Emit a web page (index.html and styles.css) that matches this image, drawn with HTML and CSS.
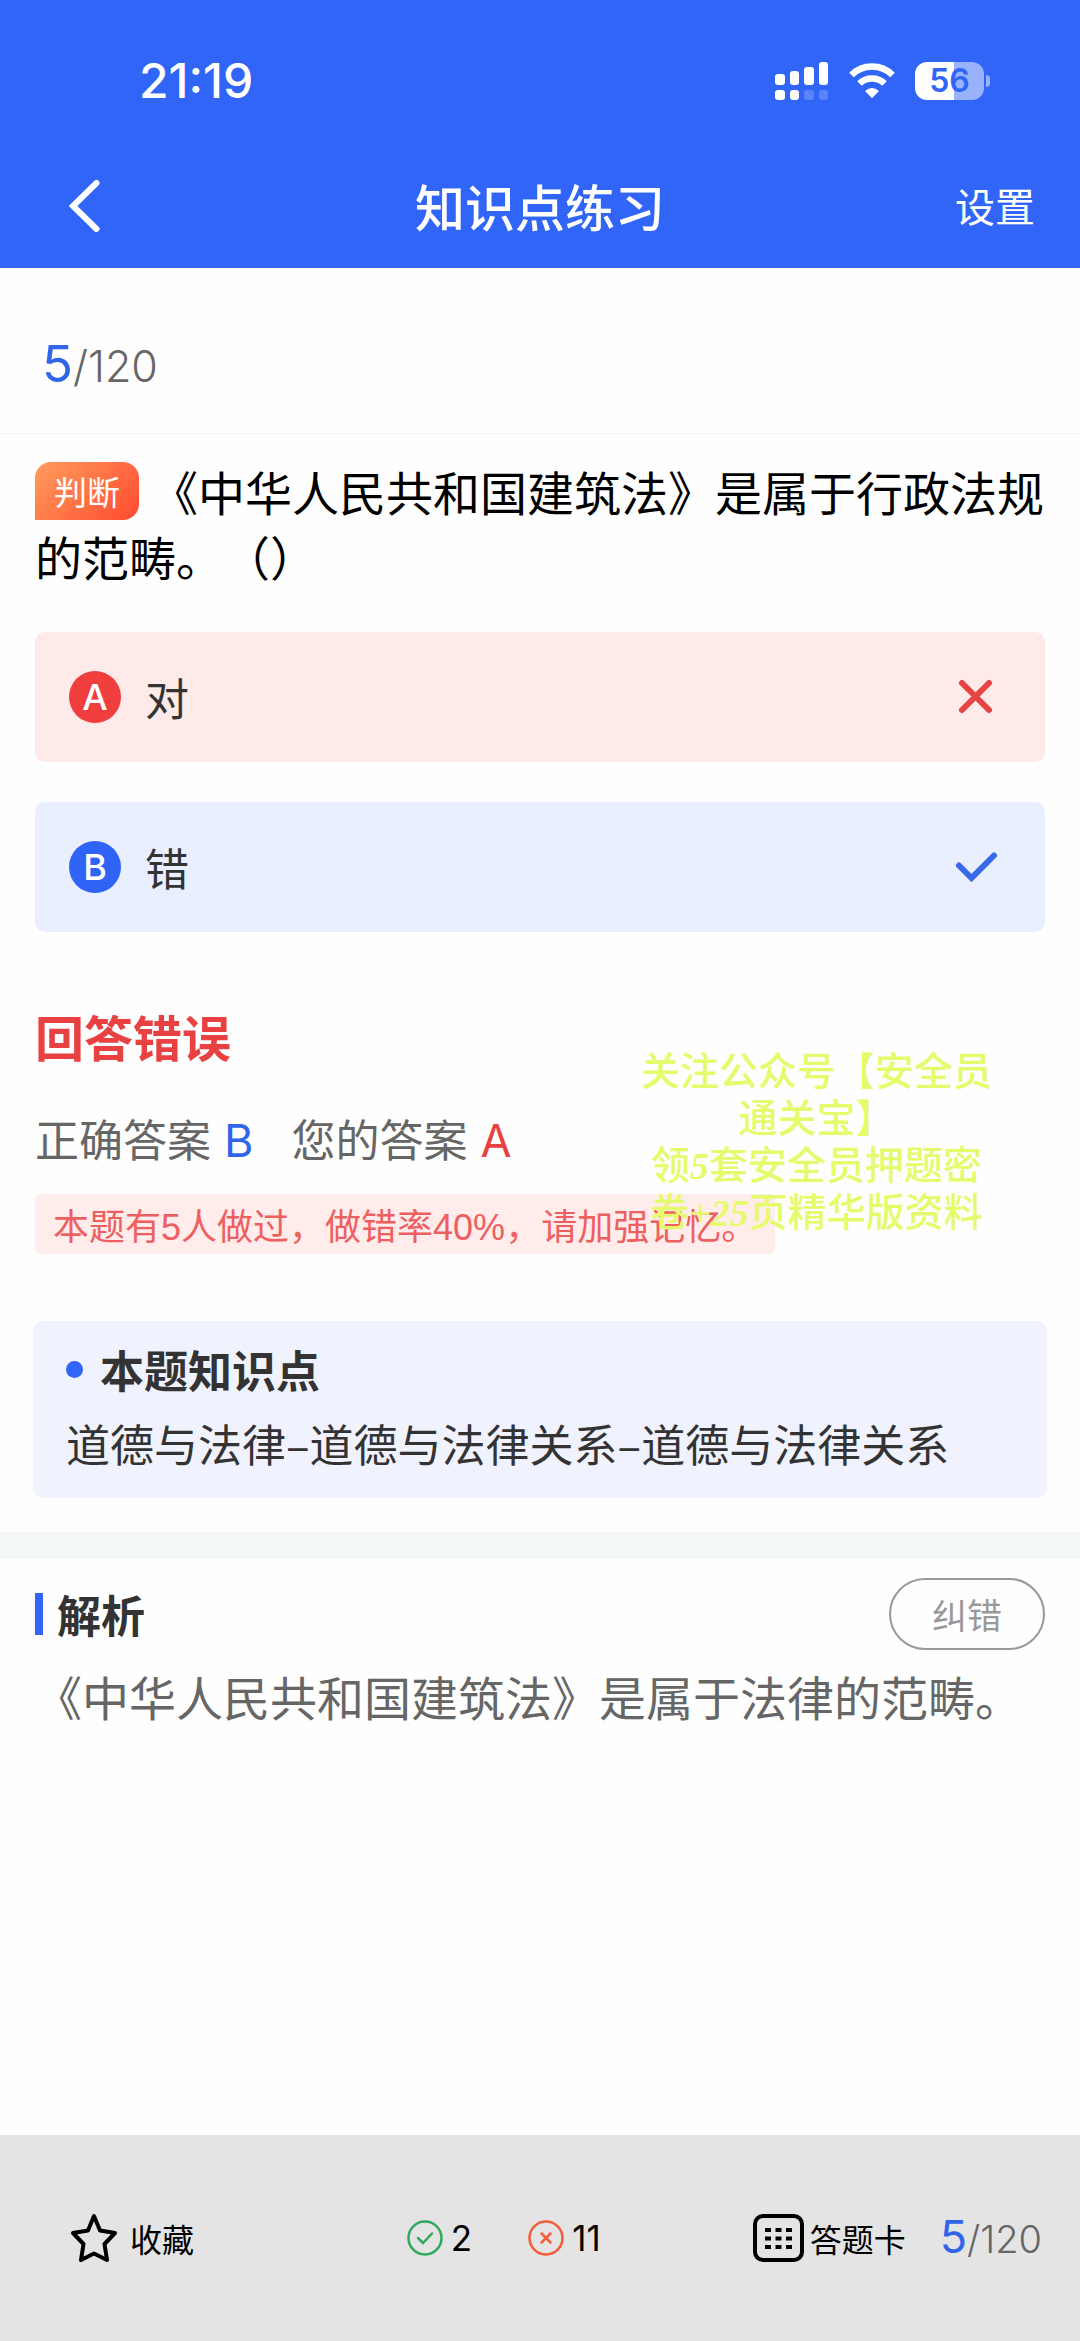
FILE: index.html
```html
<!DOCTYPE html>
<html lang="zh-CN">
<head>
<meta charset="utf-8">
<meta name="viewport" content="width=device-width, initial-scale=1">
<title>知识点练习</title>
<link rel="stylesheet" href="styles.css">
</head>
<body>
<div class="page">
  <header class="header">
    <div class="status">
      <span class="status-time">21:19</span>
      <div class="status-icons">
        <svg width="54" height="38" viewBox="0 0 54 38" fill="#fff" aria-hidden="true">
          <rect x="0" y="12" width="10" height="11" rx="3"/>
          <rect x="15" y="9" width="9" height="14" rx="3"/>
          <rect x="29" y="5" width="10" height="18" rx="3"/>
          <rect x="44" y="0" width="9" height="23" rx="3"/>
          <rect x="0" y="28" width="10" height="10" rx="3"/>
          <rect x="15" y="28" width="9" height="10" rx="3"/>
          <rect x="29" y="28" width="10" height="10" rx="3" opacity=".2"/>
          <rect x="44" y="28" width="9" height="10" rx="3" opacity=".2"/>
        </svg>
        <svg width="46" height="36" viewBox="0 0 46 36" aria-hidden="true">
          <path d="M2.500 12A29 29 0 0 1 43.500 12" fill="none" stroke="#fff" stroke-width="6.500"/>
          <path d="M10.500 20.500A18 18 0 0 1 35.500 20.500" fill="none" stroke="#fff" stroke-width="6.500"/>
          <path d="M16 28Q23 22 30 28L23.700 34.500Q23 35.200 22.300 34.500Z" fill="#fff"/>
        </svg>
        <div class="battery"><span class="battery-body">56</span><span class="battery-cap"></span></div>
      </div>
    </div>
    <nav class="nav">
      <button class="nav-back" type="button" aria-label="返回">
        <svg width="32" height="54" viewBox="0 0 32 54" fill="none" stroke="#fff" stroke-width="6" stroke-linecap="round" aria-hidden="true"><path d="M27.500 5L4 28L27.500 51"/></svg>
      </button>
      <h1 class="nav-title">知识点练习</h1>
      <button class="nav-settings" type="button">设置</button>
    </nav>
  </header>

  <main class="main">
    <div class="progress"><span class="progress-now">5</span><span class="progress-all">/120</span></div>

    <section class="question">
      <p class="question-text"><span class="tag">判断</span>《中华人民共和国建筑法》是属于行政法规的范畴。（）</p>
      <div class="options">
        <button class="option option-wrong" type="button">
          <span class="option-key">A</span><span class="option-label">对</span>
          <svg width="44" height="44" viewBox="0 0 44 44" fill="none" stroke="#e84343" stroke-width="6" stroke-linecap="round" aria-hidden="true"><path d="M8 8L35 35M35 8L8 35"/></svg>
        </button>
        <button class="option option-right" type="button">
          <span class="option-key">B</span><span class="option-label">错</span>
          <svg width="44" height="44" viewBox="0 0 44 44" fill="none" stroke="#3a69ea" stroke-width="6" stroke-linecap="round" aria-hidden="true"><path d="M5 20.500L17.500 33L40 10.500"/></svg>
        </button>
      </div>
    </section>

    <section class="result">
      <h2 class="result-title">回答错误</h2>
      <div class="answers">
        <span>正确答案</span><span class="answer answer-right">B</span>
        <span>您的答案</span><span class="answer answer-wrong">A</span>
      </div>
      <p class="note">本题有<span class="num">5</span>人做过，做错率<span class="num">40%</span>，请加强记忆。</p>
      <p class="promo">关注公众号【安全员<br>通关宝】<br>领<i>5</i>套安全员押题密<br>卷<i>+25</i>页精华版资料</p>
    </section>

    <section class="knowledge">
      <h3 class="knowledge-title">本题知识点</h3>
      <p class="knowledge-path">道德与法律–道德与法律关系–道德与法律关系</p>
    </section>

    <section class="analysis">
      <div class="analysis-head">
        <h3 class="analysis-title">解析</h3>
        <button class="report" type="button">纠错</button>
      </div>
      <p class="analysis-text">《中华人民共和国建筑法》是属于法律的范畴。</p>
    </section>
  </main>

  <footer class="footer">
    <div class="footer-left">
      <button class="tool tool-star" type="button">
        <svg width="48" height="50" viewBox="0 0 48 50" fill="none" stroke="#000" stroke-width="4" stroke-linejoin="round" aria-hidden="true"><path d="M24 3L30 17.500L45 20L34.500 31L37 47L24 40.500L11 47L13.500 31L3 20L18 17.500Z"/></svg>
        <span>收藏</span>
      </button>
    </div>
    <div class="scores">
      <span class="score">
        <svg width="36" height="36" viewBox="0 0 36 36" fill="none" stroke="#31a95c" stroke-width="2.500" stroke-linecap="round" aria-hidden="true"><circle cx="18" cy="18" r="16.500"/><path d="M11 18L16 23L25 13.500"/></svg>
        2</span>
      <span class="score">
        <svg width="36" height="36" viewBox="0 0 36 36" fill="none" stroke="#f55c3c" stroke-width="2.500" stroke-linecap="round" aria-hidden="true"><circle cx="18" cy="18" r="16.500"/><path d="M13.500 13.500L22.500 22.500M22.500 13.500L13.500 22.500"/></svg>
        11</span>
    </div>
    <div class="footer-right">
      <button class="tool tool-card" type="button">
        <svg width="51" height="48" viewBox="0 0 51 48" aria-hidden="true">
          <rect x="2" y="2" width="47" height="44" rx="8" fill="none" stroke="#000" stroke-width="4"/>
          <path d="M12 16h6M22.500 16h6M33 16h6M12 24.500h6M22.500 24.500h6M33 24.500h6M12 33h6M22.500 33h6M33 33h6" stroke="#000" stroke-width="4"/>
        </svg>
        <span>答题卡</span>
      </button>
      <div class="progress-small"><span class="progress-now">5</span><span class="progress-all">/120</span></div>
    </div>
  </footer>
</div>
</body>
</html>
```
FILE: styles.css
```css
* {
  box-sizing: border-box;
  margin: 0;
  padding: 0;
}

body {
  background: #fefefe;
  color: #333;
  font-family: "Noto Sans CJK SC", sans-serif;
  font-size: 44px;
  text-spacing-trim: space-all;
}

button {
  border: 0;
  background: none;
  color: inherit;
  font: inherit;
  cursor: pointer;
}

svg {
  display: block;
  flex: none;
}

.page {
  display: flex;
  flex-direction: column;
  min-height: 100vh;
}

/* Header */
.header {
  background: #3165f8;
  color: #fff;
}

.status {
  display: flex;
  align-items: center;
  justify-content: space-between;
  height: 141px;
  padding: 20px 90px 0 139px;
}

.status-time {
  font: 500 48px/60px Inter, sans-serif;
}

.status-icons {
  display: flex;
  align-items: center;
  gap: 20px;
}

.battery {
  display: flex;
  align-items: center;
  gap: 2px;
}

.battery-body {
  width: 69px;
  border-radius: 12px;
  background: linear-gradient(90deg, #fff 56%, #98b2fc 56%);
  color: #3165f8;
  font: 600 32px/38px Inter, sans-serif;
  text-align: center;
}

.battery-cap {
  width: 4px;
  height: 12px;
  border-radius: 0 4px 4px 0;
  background: #98b2fc;
}

.nav {
  display: grid;
  grid-template-columns: 1fr auto 1fr;
  align-items: center;
  height: 127px;
  padding: 0 45px 0 69px;
}

.nav-back {
  justify-self: start;
}

.nav-title {
  font-size: 50px;
  font-weight: 500;
  line-height: 60px;
  margin-right: 24px;
}

.nav-settings {
  justify-self: end;
  font-size: 40px;
  line-height: 60px;
}

/* Progress */
.progress {
  padding: 66px 42px 37px;
  border-bottom: 1px solid #f3f3f5;
  font: 300 43px/60px Inter, sans-serif;
}

.progress-now {
  color: #3165e8;
  font-size: 51px;
  font-weight: 400;
}

.progress-all {
  color: #666;
}

/* Question */
.question {
  padding: 24px 35px 0;
}

.question-text {
  color: #000;
  font-size: 47px;
  line-height: 65px;
}

.tag {
  display: inline-block;
  margin: 4px 12px 0 0;
  padding: 0 19px;
  border-radius: 16px 16px 16px 0;
  background: linear-gradient(135deg, #ff9d5c, #ff4a30);
  color: #fff;
  font-size: 33px;
  font-weight: 400;
  line-height: 58px;
  vertical-align: top;
}

.options {
  display: flex;
  flex-direction: column;
  gap: 40px;
  padding-top: 44px;
}

.option {
  display: flex;
  align-items: center;
  padding: 35px 47px 35px 34px;
  border-radius: 10px;
  line-height: 60px;
  text-align: left;
}

.option-wrong {
  background: #feebe9;
}

.option-right {
  background: #e9effe;
}

.option-key {
  width: 52px;
  margin-right: 24px;
  border-radius: 50%;
  color: #fff;
  font: 500 36px/52px Inter, sans-serif;
  text-align: center;
}

.option-wrong .option-key {
  background: #f03e3e;
}

.option-right .option-key {
  background: #3064f6;
}

.option-label {
  flex: 1;
}

/* Result */
.result {
  position: relative;
  padding: 74px 35px 0;
}

.result-title {
  color: #e94141;
  font-size: 49px;
  font-weight: 700;
  line-height: 60px;
}

.answers {
  display: flex;
  align-items: baseline;
  padding-top: 42px;
  color: #666;
  line-height: 60px;
}

.answer {
  margin-left: 13px;
  font: 400 45px/50px Inter, sans-serif;
}

.answer-right {
  margin-right: 38px;
  color: #3165e8;
}

.answer-wrong {
  color: #e94141;
}

.note {
  width: fit-content;
  margin-top: 26px;
  padding: 0 18px;
  border-radius: 6px;
  background: #ffeceb;
  color: #ee5f5f;
  font-size: 36px;
  line-height: 60px;
}

.num {
  font-family: "Liberation Sans", sans-serif;
  line-height: 40px;
}

.promo {
  position: absolute;
  top: 113px;
  right: 88px;
  color: #e6fb6c;
  font-size: 39px;
  font-weight: 500;
  line-height: 47px;
  text-align: center;
}

.promo i {
  font: italic 700 38px/38px "Liberation Serif", serif;
}

/* Knowledge point */
.knowledge {
  margin: 67px 33px 34px;
  padding: 18px 33px 25px;
  border-radius: 10px;
  background: #f0f2fe;
}

.knowledge-title {
  display: flex;
  align-items: center;
  gap: 17px;
  font-size: 44px;
  line-height: 60px;
}

.knowledge-title::before {
  content: "";
  width: 17px;
  height: 17px;
  border-radius: 50%;
  background: #3165f8;
}

.knowledge-path {
  padding-top: 14px;
  line-height: 60px;
}

/* Analysis */
.analysis {
  padding: 19px 35px 40px;
  border-top: 27px solid #f3f7f8;
}

.analysis-head {
  display: flex;
  align-items: center;
  justify-content: space-between;
}

.analysis-title {
  display: flex;
  align-items: center;
  gap: 14px;
  font-size: 44px;
  line-height: 60px;
}

.analysis-title::before {
  content: "";
  width: 8px;
  height: 42px;
  background: #3165f8;
}

.report {
  padding: 0 41px;
  border: 2px solid #999;
  border-radius: 36px;
  color: #999;
  font-size: 35px;
  line-height: 68px;
}

.analysis-text {
  padding-top: 16px;
  color: #666;
  font-size: 47px;
  line-height: 60px;
}

/* Footer */
.footer {
  display: flex;
  align-items: center;
  margin-top: auto;
  padding: 71px 38px 71px 70px;
  background: #e4e4e4;
  color: #000;
}

.footer-left {
  display: flex;
  flex: 7 1 auto;
}

.footer-right {
  display: flex;
  flex: 5 1 auto;
  align-items: center;
  justify-content: flex-end;
  gap: 34px;
}

.tool {
  display: flex;
  align-items: center;
  font-size: 32px;
  line-height: 64px;
}

.tool-star {
  gap: 12px;
}

.tool-card {
  gap: 6px;
}

.scores {
  display: flex;
  gap: 56px;
}

.score {
  display: flex;
  align-items: center;
  gap: 8px;
  font: 400 35px/64px Inter, sans-serif;
}

.progress-small {
  font: 300 38px/60px Inter, sans-serif;
}

.progress-small .progress-now {
  font-size: 45px;
}
```
